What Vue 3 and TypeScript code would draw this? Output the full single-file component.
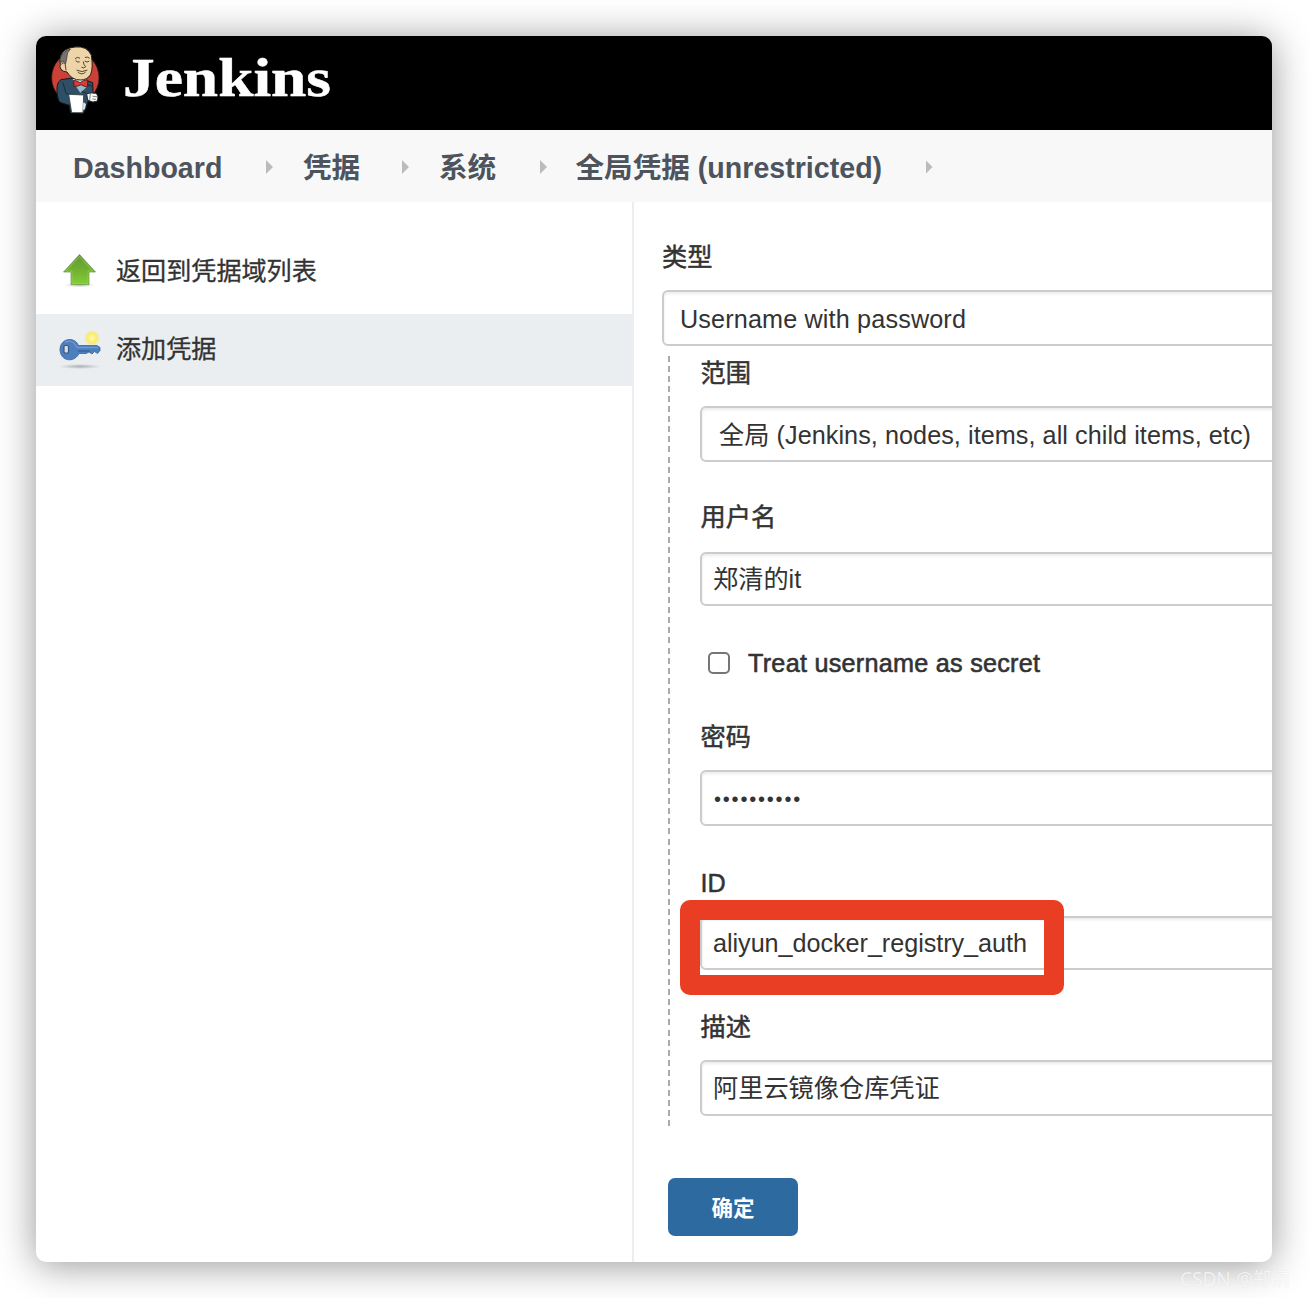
<script setup lang="ts">
interface Crumb {
  text: string
  width: number
}

interface Field {
  label: string
  value: string
  kind: 'select' | 'text' | 'text cjk' | 'password' | 'text code'
  height: number
  gap: number
}

const crumbs: Crumb[] = [
  { text: 'Dashboard', width: 193 },
  { text: '凭据', width: 99 },
  { text: '系统', width: 101 },
  { text: '全局凭据 (unrestricted)', width: 350 },
]

const topFields: Field[] = [
  { label: '范围', value: '全局 (Jenkins, nodes, items, all child items, etc)', kind: 'select', height: 56, gap: 16 },
  { label: '用户名', value: '郑清的it', kind: 'text cjk', height: 54, gap: 18 },
]

const bottomFields: Field[] = [
  { label: '密码', value: '••••••••••', kind: 'password', height: 56, gap: 16 },
  { label: 'ID', value: 'aliyun_docker_registry_auth', kind: 'text code', height: 54, gap: 16 },
  { label: '描述', value: '阿里云镜像仓库凭证', kind: 'text cjk', height: 56, gap: 16 },
]
</script>

<template>
  <div class="page">
    <div class="window">
      <header class="header">
        <svg class="butler" viewBox="60 42 150 213" width="50" height="71">
          <ellipse cx="136" cy="143" rx="71" ry="76" fill="#cb4138" stroke="#3a1512" stroke-width="2" />
          <path d="M93 149 Q80 158 81 180 Q82 209 90 217 L118 226 L121 248 L160 250 L168 236 L173 215 L190 212 L188 158 L166 150 L128 144 Z" fill="#2f4f66" stroke="#10191f" stroke-width="3" />
          <path d="M126 147 L151 187 L173 153 L161 139 Z" fill="#dfe9ee" stroke="#1b2933" stroke-width="2" />
          <path d="M137 168 L151 189 L174 167 L158 160 Z" fill="#9ab9ca" />
          <path d="M91 103 Q86 92 93 75 Q103 54 135 51 Q172 47 184 76 Q190 112 182 133 Q172 150 152 150 Q126 151 111 126 Q99 125 93 118 Q88 110 91 103 Z" fill="#eed4a9" stroke="#28211a" stroke-width="3" />
          <path d="M91 99 Q88 78 103 67 Q113 57 121 58 Q110 68 111 80 L107 101 Q101 90 91 99 Z" fill="#777174" stroke="#302d2e" stroke-width="2" />
          <path d="M94 103 Q100 94 106 103 L108 121" fill="#e9cda2" stroke="#31281e" stroke-width="2.5" />
          <path d="M137 92 Q140 98 148 96 M165 94 Q171 99 177 94 M136 85 Q143 79 149 84 M166 82 Q172 79 178 84 M160 96 Q161 106 167 110 Q161 117 155 112 M141 121 Q155 129 171 121 M144 127 Q155 137 166 127" fill="none" stroke="#483a2b" stroke-width="2.8" stroke-linecap="round" />
          <path d="M131 151 Q142 152 150 158 Q161 149 173 150 L173 171 Q160 169 153 164 Q143 170 132 169 Z" fill="#df3b36" stroke="#4a1418" stroke-width="2.5" />
          <path d="M98 156 L109 192 L133 194 M171 163 L188 170 M155 184 L169 190" fill="none" stroke="#172731" stroke-width="2.5" />
          <path d="M116 193 L161 195 L159 248 L125 248 Z" fill="#fff" stroke="#303b43" stroke-width="2.5" />
          <path d="M160 217 L168 222 L164 238 L159 240 Z" fill="#e6e8ea" />
          <path d="M170 191 Q185 187 197 190 Q208 196 201 214 L188 216 L173 210 Z" fill="#f7f7f5" stroke="#242b30" stroke-width="3" />
          <path d="M181 192 L179 209 M188 199 L201 200 M187 207 L198 208" fill="none" stroke="#484b4d" stroke-width="2" />
        </svg>
        <svg class="wordmark" width="240" height="84" viewBox="0 0 240 84">
          <text x="3" y="52" textLength="208" lengthAdjust="spacingAndGlyphs">Jenkins</text>
        </svg>
      </header>

      <nav class="crumbs">
        <template v-for="c in crumbs" :key="c.text">
          <span class="crumb" :style="{ width: c.width + 'px' }">{{ c.text }}</span>
          <i class="chevron"></i>
        </template>
      </nav>

      <div class="body">
        <aside class="side">
          <a class="task">
            <svg class="task-icon" width="48" height="48" viewBox="0 0 48 48">
              <defs>
                <linearGradient id="leaf" x1="0" y1="0" x2="0" y2="1">
                  <stop offset="0" stop-color="#65963c" />
                  <stop offset=".45" stop-color="#6fac2f" />
                  <stop offset="1" stop-color="#82cf36" />
                </linearGradient>
                <radialGradient id="shade">
                  <stop offset="0" stop-color="#555" stop-opacity=".4" />
                  <stop offset="1" stop-color="#555" stop-opacity="0" />
                </radialGradient>
              </defs>
              <ellipse cx="23.5" cy="39" rx="15" ry="2.5" fill="url(#shade)" />
              <path d="M23.5 8.5 L39.5 26 H33 V38.5 H15 V26 H7.5 Z" fill="url(#leaf)" stroke="#669640" stroke-opacity=".7" stroke-width="1" stroke-linejoin="round" />
              <path d="M23.5 10.5 L36.5 25 H32 V37.5 H16 V25 H10 Z" fill="none" stroke="#a0d66c" stroke-opacity=".55" />
            </svg>
            <span>返回到凭据域列表</span>
          </a>
          <a class="task active">
            <svg class="task-icon" width="48" height="48" viewBox="0 0 48 48">
              <defs>
                <radialGradient id="spark">
                  <stop offset="0" stop-color="#fffbd0" />
                  <stop offset=".3" stop-color="#fff27a" />
                  <stop offset=".75" stop-color="#f8ea69" stop-opacity=".85" />
                  <stop offset="1" stop-color="#f8ed86" stop-opacity="0" />
                </radialGradient>
              </defs>
              <ellipse cx="24" cy="42.5" rx="21" ry="2.6" fill="url(#shade)" />
              <path d="M13.5 15.5 C18 15.5 21 18 22.5 21.5 H41 L44 23.5 V26.5 L41.5 29.5 L38.5 27.5 L36 30 L33 28 L30 29.5 H23 C21 33.5 17.5 35.8 13.5 35.8 C7.5 35.8 4 31 4 25.5 C4 20 8 15.5 13.5 15.5 Z" fill="#4e7fbd" stroke="#3b649e" stroke-opacity=".8" stroke-width="1" />
              <path d="M9 18.5 Q14 15.5 18 19 L21 23.5 H42" fill="none" stroke="#7ba4d4" stroke-opacity=".7" stroke-width="1.3" />
              <path d="M22 27 H34" stroke="#335f9b" stroke-width="1.2" />
              <rect x="8" y="21.5" width="4.5" height="7.5" rx="1" fill="#d6dde4" stroke="#37567c" stroke-width="1.2" />
              <circle cx="36" cy="14" r="7.8" fill="url(#spark)" />
            </svg>
            <span>添加凭据</span>
          </a>
        </aside>

        <main class="main">
          <div class="label">类型</div>
          <div class="control kind">Username with password</div>

          <section class="group">
            <div v-for="f in topFields" :key="f.label" class="field">
              <div class="label">{{ f.label }}</div>
              <div class="control" :class="f.kind" :style="{ height: f.height + 'px', marginTop: f.gap + 'px' }">{{ f.value }}</div>
            </div>
            <div class="check">
              <span class="box"></span>
              <span class="check-text">Treat username as secret</span>
            </div>
            <div v-for="f in bottomFields" :key="f.label" class="field">
              <div class="label">{{ f.label }}</div>
              <div class="control" :class="f.kind" :style="{ height: f.height + 'px', marginTop: f.gap + 'px' }">
                <span>{{ f.value }}</span>
                <span v-if="f.label === 'ID'" class="highlight"></span>
              </div>
            </div>
          </section>

          <button class="submit" type="button">确定</button>
        </main>
      </div>
    </div>
    <div class="watermark">CSDN @郑清</div>
  </div>
</template>

<style>
body {
  margin: 0;
  background: #fff;
  overflow: hidden;
}
</style>

<style scoped>
.page {
  position: relative;
  box-sizing: border-box;
  width: 1308px;
  height: 1298px;
  padding: 36px;
  overflow: hidden;
  color: #333;
  font-family: "Liberation Sans", "Noto Sans CJK SC", sans-serif;
  font-size: 25.2px;
}
.window {
  width: 1236px;
  height: 1226px;
  border-radius: 10px;
  background: #fff;
  box-shadow: 0 3px 38px rgba(0, 0, 0, 0.42);
}
.header {
  display: flex;
  align-items: flex-start;
  box-sizing: border-box;
  height: 94px;
  padding: 8px 0 0 14px;
  border-radius: 10px 10px 0 0;
  background: #000;
}
.wordmark {
  flex: none;
  margin-left: 20px;
}
.wordmark text {
  fill: #fff;
  stroke: #fff;
  stroke-width: 0.5px;
  font: bold 54px "Liberation Serif", serif;
}
.crumbs {
  display: flex;
  align-items: center;
  height: 72px;
  padding-left: 37px;
  background: #f8f8f8;
  color: #4d545d;
  font-size: 28.6px;
  font-weight: bold;
}
.crumb {
  flex: none;
  line-height: 40px;
  padding-top: 4px;
  white-space: nowrap;
}
.crumb:nth-of-type(4) {
  margin-left: -1.5px;
}
.chevron {
  flex: none;
  width: 7px;
  height: 14px;
  margin: 2px 30px 0 0;
  background: #bbb;
  clip-path: polygon(0 0, 100% 50%, 0 100%);
}
.body {
  display: flex;
  height: 1060px;
  border-radius: 0 0 10px 10px;
  overflow: hidden;
}
.side {
  flex: none;
  width: 596px;
  padding-top: 34px;
  border-right: 2px solid #eaeef2;
}
.task {
  display: flex;
  align-items: center;
  box-sizing: border-box;
  height: 72px;
  margin-bottom: 6px;
  padding: 0 0 4px 20px;
  font-size: 25.1px;
  -webkit-text-stroke: 0.3px #333;
}
.task span {
  margin-left: 12px;
  padding-bottom: 2px;
}
.active {
  background: #eaeef1;
}
.main {
  flex: 1;
  min-width: 0;
  padding: 38px 0 0 28px;
}
.label {
  height: 34px;
  line-height: 34px;
  -webkit-text-stroke: 0.5px #333;
}
.field .label {
  padding-left: 0.6px;
}
.control {
  position: relative;
  box-sizing: border-box;
  display: flex;
  align-items: center;
  width: 700px;
  padding-left: 11px;
  border: 2px solid #ccc;
  border-radius: 6px;
  background: #fff;
  box-shadow: inset 0 2px 3px rgba(0, 0, 0, 0.08);
  white-space: pre;
}
.select {
  padding: 0 0 2px 17px;
  letter-spacing: 0.06px;
}
.cjk {
  padding-bottom: 5px;
}
.code {
  letter-spacing: -0.04px;
}
.kind {
  height: 56px;
  margin-top: 16px;
  padding: 3px 0 0 16px;
  letter-spacing: 0.15px;
}
.group {
  box-sizing: border-box;
  height: 770px;
  margin: 10px 0 0 6px;
  padding-left: 32px;
  background: repeating-linear-gradient(to bottom, #aaa 0 6px, transparent 6px 10.0526px) 0 0 / 2px 100% no-repeat;
}
.field + .field {
  margin-top: 40px;
}
.field:nth-child(2) {
  margin-top: 38px;
}
.check {
  display: flex;
  align-items: center;
  height: 34px;
  margin: 40px 0;
  padding-left: 8px;
}
.box {
  box-sizing: border-box;
  width: 22px;
  height: 22px;
  border: 2px solid #767676;
  border-radius: 5px;
}
.check-text {
  margin-left: 18px;
  letter-spacing: 0.26px;
  -webkit-text-stroke: 0.6px #333;
}
.password {
  padding: 2px 0 0 12px;
  font-size: 20px;
  letter-spacing: 1.8px;
}
.highlight {
  position: absolute;
  box-sizing: border-box;
  left: -22px;
  top: -18px;
  width: 384.4px;
  height: 95px;
  border: 20px solid #e93e23;
  border-radius: 10px;
}
.submit {
  display: block;
  width: 130px;
  height: 58px;
  margin: 52px 0 0 6px;
  padding: 0 0 2px;
  border: 0;
  border-radius: 7px;
  background: #2d6a9f;
  color: #fff;
  font: bold 21.5px "Noto Sans CJK SC", sans-serif;
}
.watermark {
  position: absolute;
  left: 1180px;
  top: 1265px;
  color: rgba(255, 255, 255, 0.75);
  font: 19px/28px "Noto Sans", "Noto Sans CJK SC", sans-serif;
  text-shadow: 0 0 1px rgba(0, 0, 0, 0.1);
  white-space: nowrap;
}
</style>
